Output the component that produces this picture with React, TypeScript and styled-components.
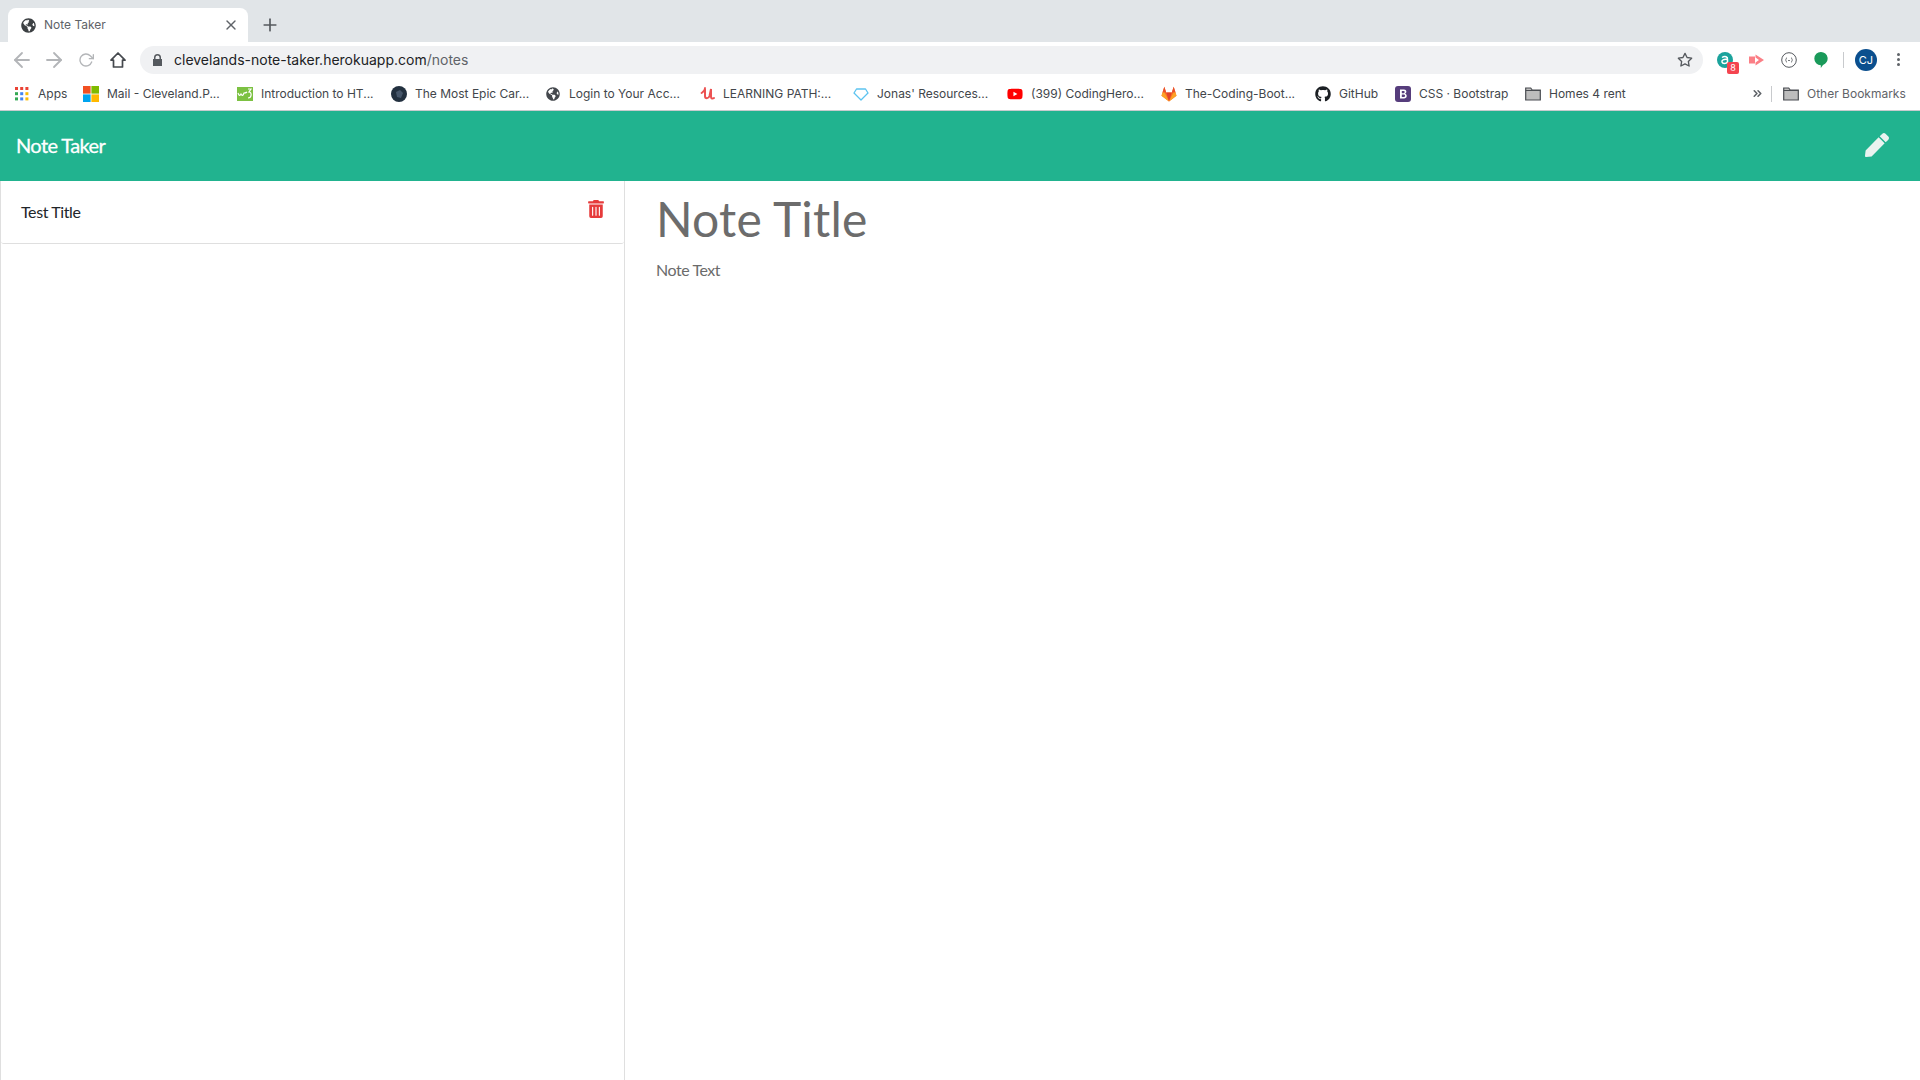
import React from 'react'
import styled, { createGlobalStyle } from 'styled-components'
import { FaPen, FaTrashAlt, FaGlobeAmericas, FaGithub, FaYoutube } from 'react-icons/fa'
import { FiArrowLeft, FiArrowRight, FiRotateCw, FiX, FiPlus, FiStar, FiChevronsRight } from 'react-icons/fi'

const GlobalStyle = createGlobalStyle`
  html, body { margin: 0; padding: 0; height: 100%; background: #fff; overflow: hidden; }
  * { box-sizing: border-box; }
`

const Page = styled.div`
  width: 1920px;
  height: 1080px;
  display: flex;
  flex-direction: column;
  font-family: "Inter", "Liberation Sans", sans-serif;
`
const TabStrip = styled.div`
  height: 42px;
  background: #e1e5e8;
  display: flex;
  align-items: flex-end;
  padding-left: 8px;
`
const Tab = styled.div`
  width: 240px;
  height: 34px;
  background: #fff;
  border-radius: 8px 8px 0 0;
  display: flex;
  align-items: center;
  padding: 0 9px 0 13px;
  color: #5f6368;
  font-size: 12px;
  gap: 8px;
`
const TabTitle = styled.span`
  flex: 1;
  margin-top: -1px;
`
const NewTab = styled.div`
  width: 36px;
  height: 34px;
  margin-left: 4px;
  display: flex;
  align-items: center;
  justify-content: center;
  color: #55595e;
`
const Toolbar = styled.div`
  height: 35px;
  display: flex;
  align-items: center;
  padding-left: 6px;
  background: #fff;
`
const NavButton = styled.div<{ $color: string }>`
  width: 32px;
  height: 28px;
  display: flex;
  align-items: center;
  justify-content: center;
  color: ${p => p.$color};
`
const Omnibox = styled.div`
  width: 1563px;
  height: 28px;
  margin-left: 6px;
  background: #f0f1f3;
  border-radius: 14px;
  display: flex;
  align-items: center;
  padding: 0 10px 0 12px;
  font-size: 14px;
  color: #202124;
`
const Lock = styled.svg`
  margin-right: 11px;
`
const Url = styled.span`
  flex: 1;
`
const UrlPath = styled.span`
  color: #5f6368;
`
const Extensions = styled.div`
  flex: 1;
  display: flex;
  align-items: center;
  padding-left: 6px;
`
const Ext = styled.div`
  position: relative;
  width: 32px;
  height: 28px;
  display: flex;
  align-items: center;
  justify-content: center;
`
const Badge = styled.span`
  position: absolute;
  right: 2px;
  bottom: 0;
  width: 12px;
  height: 12px;
  border-radius: 2px;
  background: #f4444f;
  color: #fff;
  font-size: 9px;
  line-height: 12px;
  text-align: center;
`
const Divider = styled.div`
  width: 1px;
  height: 16px;
  margin-left: 6px;
  background: #c8cacd;
`
const Avatar = styled.div`
  width: 22px;
  height: 22px;
  margin-left: 11px;
  border-radius: 50%;
  background: #0b4f8e;
  color: #fff;
  font-size: 11px;
  display: flex;
  align-items: center;
  justify-content: center;
`
const Dots = styled.div`
  margin-left: 20px;
  display: flex;
  flex-direction: column;
  gap: 2px;
  i {
    width: 3px;
    height: 3px;
    border-radius: 50%;
    background: #5f6368;
  }
`
const Bookmarks = styled.div`
  height: 34px;
  border-bottom: 1px solid #c9cbce;
  background: #fff;
  display: flex;
  align-items: center;
  padding: 0 15px 0 14px;
  font-size: 12px;
  color: #42464b;
`
const Mark = styled.div<{ $w: number }>`
  width: ${p => p.$w}px;
  display: flex;
  align-items: center;
  gap: 8px;
  white-space: nowrap;
`
const Favicon = styled.div`
  width: 16px;
  height: 16px;
  display: flex;
  align-items: center;
  justify-content: center;
  flex: none;
`
const MoreBookmarks = styled.div`
  margin-left: auto;
  display: flex;
  align-items: center;
  color: #5f6368;
`
const BarDivider = styled.div`
  width: 1px;
  height: 16px;
  background: #c8cacd;
  margin: 0 11px 0 7px;
`
const Navbar = styled.header`
  height: 70px;
  flex: none;
  background: #21b38f;
  display: flex;
  align-items: center;
  justify-content: space-between;
  padding: 0 31px 0 16px;
  color: #fff;
`
const Brand = styled.div`
  font-family: "Lato", sans-serif;
  font-size: 20px;
  font-weight: 400;
  letter-spacing: -0.6px;
  -webkit-text-stroke: 0.3px #fff;
  margin-top: -3px;
`
const Pen = styled(FaPen)`
  margin-top: -2px;
`
const Main = styled.main`
  flex: 1;
  display: flex;
  min-height: 0;
  font-family: "Lato", sans-serif;
`
const Sidebar = styled.aside`
  width: 625px;
  flex: none;
  border-left: 1px solid #dfdfdf;
  border-right: 1px solid #dfdfdf;
`
const NoteRow = styled.div`
  height: 63px;
  border-bottom: 1px solid #dfdfdf;
  border-radius: 0 0 3px 3px;
  display: flex;
  justify-content: space-between;
  padding: 20px 19px 0 20px;
  font-size: 16px;
  letter-spacing: -0.4px;
  color: #212529;
`
const RowTitle = styled.span`
  line-height: 22px;
`
const Trash = styled(FaTrashAlt)`
  color: #e63b3b;
  margin-top: -1px;
`
const Editor = styled.section`
  flex: 1;
  padding: 9px 31px;
  color: #6b6b6b;
`
const NoteTitle = styled.h1`
  margin: 0;
  font-size: 48px;
  font-weight: 400;
  line-height: 58px;
  letter-spacing: 0.2px;
  color: #6c6c6c;
`
const NoteText = styled.p`
  margin: 10px 0 0;
  font-size: 16px;
  line-height: 24px;
  letter-spacing: -0.45px;
`

const AppsGrid = () => (
  <svg width="14" height="14" viewBox="0 0 14 14">
    {[0, 5.2, 10.4].map((y, r) =>
      [0, 5.2, 10.4].map((x, c) => (
        <rect key={`${r}${c}`} x={x} y={y} width="3" height="3"
          fill={[['#ea4335', '#ea4335', '#ea4335'], ['#34a853', '#4285f4', '#fbbc05'], ['#34a853', '#4285f4', '#fbbc05']][r][c]} />
      ))
    )}
  </svg>
)

const Microsoft = () => (
  <svg width="16" height="16" viewBox="0 0 16 16">
    <rect width="7.6" height="7.6" fill="#f25022" />
    <rect x="8.4" width="7.6" height="7.6" fill="#7fba00" />
    <rect y="8.4" width="7.6" height="7.6" fill="#00a4ef" />
    <rect x="8.4" y="8.4" width="7.6" height="7.6" fill="#ffb900" />
  </svg>
)

const W3 = () => (
  <svg width="16" height="16" viewBox="0 0 16 16">
    <rect y="1" width="16" height="14" fill="#7cc142" />
    <path d="M1 7c1 3 2 3 3 1 1 2 2 2 3-1 1 0 2 0 3-1" fill="none" stroke="#fff" strokeWidth="1.2" />
    <path d="M11 3h3l-2 3c3 0 3 6-1 6" fill="none" stroke="#fff" strokeWidth="1.2" />
  </svg>
)

const EpicDot = () => (
  <svg width="16" height="16" viewBox="0 0 16 16">
    <circle cx="8" cy="8" r="8" fill="#22303f" />
    <path d="M5 6l4-2 3 3-2 5-4-1z" fill="#46566a" />
  </svg>
)

const Udemy = () => (
  <svg width="15" height="15" viewBox="0 0 15 15">
    <path d="M5 2C5 5 3 6 1.500 7" fill="none" stroke="#ec5252" strokeWidth="1.800" strokeLinecap="round" />
    <path d="M5 3.500V10c0 3 3.500 3 4.500 0L11 3v8c0 1.500 1.500 2 3 1" fill="none" stroke="#ec5252" strokeWidth="2" strokeLinecap="round" />
  </svg>
)

const Diamond = () => (
  <svg width="16" height="14" viewBox="0 0 16 14">
    <path d="M3.500 2h9L15 6 8 13 1 6z" fill="none" stroke="#5cc3f0" strokeWidth="1.300" strokeLinejoin="round" />
  </svg>
)

const Gitlab = () => (
  <svg width="16" height="16" viewBox="0 0 16 16">
    <path d="M.5 9.800l1-3.300L3.300.8l1.900 5.700h5.600L12.700.8l1.800 5.700 1 3.300L8 15.500z" fill="#fc6d26" />
    <path d="M8 15.500L5.200 6.500h5.600z" fill="#e24329" />
    <path d="M1.500 6.500L3.300.8l1.900 5.700zM14.500 6.500L12.700.8l-1.900 5.700z" fill="#e8502d" />
    <path d="M.5 9.800l1-3.300 2 0L8 15.500zM15.500 9.800l-1-3.300-2 0L8 15.500z" fill="#fca326" />
  </svg>
)

const BootstrapB = () => (
  <svg width="16" height="16" viewBox="0 0 16 16">
    <rect width="16" height="16" rx="3" fill="#563d7c" />
    <path d="M5 3.500h4c3 0 3 3.600 1 4.200 2.600.5 2.400 4.800-1 4.800H5zM6.800 5v2.200h2c1.200 0 1.200-2.200 0-2.200zM6.800 8.500V11h2.300c1.400 0 1.400-2.500 0-2.500z" fill="#fff" fillRule="evenodd" />
  </svg>
)

const Folder = () => (
  <svg width="16" height="14" viewBox="0 0 16 14">
    <path d="M.7 1h5l1.500 2h8.100v10H.7z" fill="#bdbdbd" stroke="#4a4d52" strokeWidth="1.200" />
    <path d="M.7 3.500h14.600" stroke="#4a4d52" strokeWidth="1" />
  </svg>
)

const HomeIcon = () => (
  <svg width="18" height="18" viewBox="0 0 18 18">
    <path d="M9 2L2 9.200h2.500V16h9V9.200H16z" fill="none" stroke="#45494e" strokeWidth="1.700" strokeLinejoin="round" />
  </svg>
)

const bookmarks: { icon: React.ReactNode; label: string; width: number }[] = [
  { icon: <AppsGrid />, label: 'Apps', width: 69 },
  { icon: <Microsoft />, label: 'Mail - Cleveland.P...', width: 154 },
  { icon: <W3 />, label: 'Introduction to HT...', width: 154 },
  { icon: <EpicDot />, label: 'The Most Epic Car...', width: 154 },
  { icon: <FaGlobeAmericas size={14} color="#44484d" />, label: 'Login to Your Acc...', width: 154 },
  { icon: <Udemy />, label: 'LEARNING PATH:...', width: 154 },
  { icon: <Diamond />, label: "Jonas' Resources...", width: 154 },
  { icon: <FaYoutube size={16} color="#f00" />, label: '(399) CodingHero...', width: 154 },
  { icon: <Gitlab />, label: 'The-Coding-Boot...', width: 154 },
  { icon: <FaGithub size={16} color="#1b1f23" />, label: 'GitHub', width: 80 },
  { icon: <BootstrapB />, label: 'CSS · Bootstrap', width: 130 },
  { icon: <Folder />, label: 'Homes 4 rent', width: 110 },
]

export default function App() {
  return (
    <Page>
      <GlobalStyle />
      <TabStrip>
        <Tab>
          <FaGlobeAmericas size={15} color="#3c4043" />
          <TabTitle>Note Taker</TabTitle>
          <FiX size={16} color="#5f6368" />
        </Tab>
        <NewTab><FiPlus size={20} /></NewTab>
      </TabStrip>
      <Toolbar>
        <NavButton $color="#b3b5b8"><FiArrowLeft size={24} strokeWidth={1.8} /></NavButton>
        <NavButton $color="#b3b5b8"><FiArrowRight size={24} strokeWidth={1.8} /></NavButton>
        <NavButton $color="#b3b5b8"><FiRotateCw size={16} /></NavButton>
        <NavButton $color="#45494e"><HomeIcon /></NavButton>
        <Omnibox>
          <Lock width="11" height="12" viewBox="0 0 11 12">
            <path d="M2 5V3.500a3.500 3.500 0 0 1 7 0V5h1v7H1V5zm1.500 0h4V3.500a2 2 0 0 0-4 0z" fill="#55595e" fillRule="evenodd" />
          </Lock>
          <Url>clevelands-note-taker.herokuapp.com<UrlPath>/notes</UrlPath></Url>
          <FiStar size={16} color="#55595e" />
        </Omnibox>
        <Extensions>
          <Ext>
            <svg width="16" height="16" viewBox="0 0 16 16">
              <circle cx="8" cy="8" r="8" fill="#1ba39c" />
              <path d="M5 5.500c3-2 6-.5 5.500 2v4M10.500 7.500c-4-.5-6 .5-5.500 2.500s4 2 5.500 0" fill="none" stroke="#fff" strokeWidth="1.500" />
            </svg>
            <Badge>8</Badge>
          </Ext>
          <Ext>
            <svg width="16" height="14" viewBox="0 0 16 14">
              <rect x="0" y="3.500" width="6" height="7" fill="#fb7f86" />
              <path d="M6.500 1.500L15 7l-8.500 5.500V9.500L10 7 6.500 4.500z" fill="#fb7f86" />
            </svg>
          </Ext>
          <Ext>
            <svg width="16" height="16" viewBox="0 0 16 16">
              <circle cx="8" cy="8" r="7.300" fill="none" stroke="#55595e" strokeWidth="1" />
              <path d="M6 5.500C5 5.500 5.500 8 4.500 8c1 0 .5 2.500 1.500 2.500M10 5.500c1 0 .5 2.500 1.500 2.500-1 0-.5 2.500-1.500 2.500M7 8.500h2" fill="none" stroke="#55595e" strokeWidth=".8" />
            </svg>
          </Ext>
          <Ext>
            <svg width="14" height="16" viewBox="0 0 14 16">
              <path d="M7 0a6.600 6.600 0 0 1 2 12.900L6.800 16v-2.800A6.600 6.600 0 0 1 7 0z" fill="#1a9a5a" />
            </svg>
          </Ext>
          <Divider />
          <Avatar>CJ</Avatar>
          <Dots><i /><i /><i /></Dots>
        </Extensions>
      </Toolbar>
      <Bookmarks>
        {bookmarks.map(b => (
          <Mark key={b.label} $w={b.width}>
            <Favicon>{b.icon}</Favicon>
            {b.label}
          </Mark>
        ))}
        <MoreBookmarks>
          <FiChevronsRight size={13} strokeWidth={3} />
          <BarDivider />
          <Mark $w={122}>
            <Favicon><Folder /></Favicon>
            Other Bookmarks
          </Mark>
        </MoreBookmarks>
      </Bookmarks>
      <Navbar>
        <Brand>Note Taker</Brand>
        <Pen size={24} color="#e9f3f0" />
      </Navbar>
      <Main>
        <Sidebar>
          <NoteRow>
            <RowTitle>Test Title</RowTitle>
            <Trash size={18} />
          </NoteRow>
        </Sidebar>
        <Editor>
          <NoteTitle>Note Title</NoteTitle>
          <NoteText>Note Text</NoteText>
        </Editor>
      </Main>
    </Page>
  )
}
